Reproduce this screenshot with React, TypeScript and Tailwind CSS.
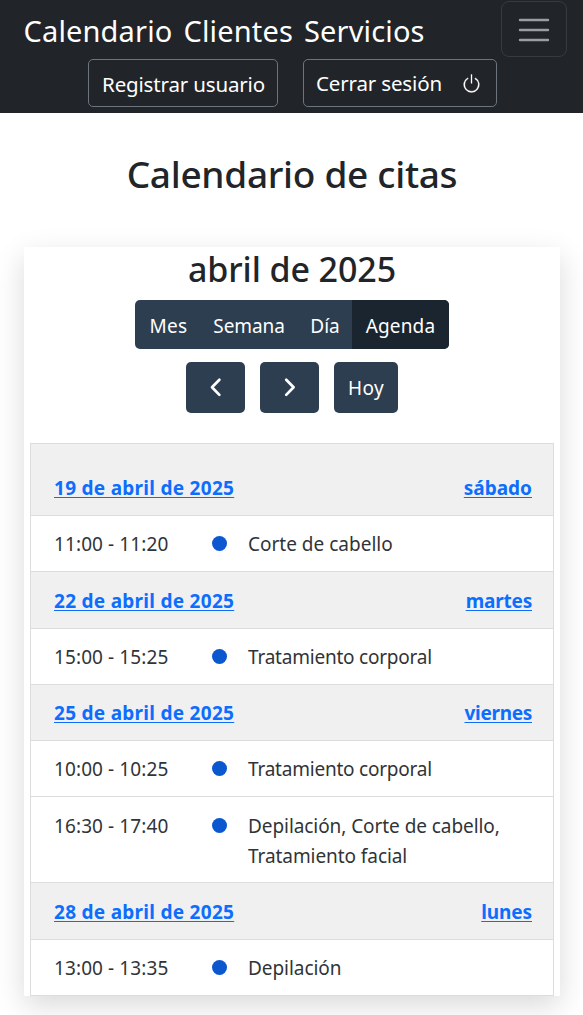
import React from "react";

type Appointment = { time: string; title: string; titleClass: string; rowClass: string };
type Day = { date: string; weekday: string; weekdayClass: string; rowClass: string; items: Appointment[] };

const days: Day[] = [
  {
    date: "19 de abril de 2025",
    weekday: "sábado",
    weekdayClass: "tracking-[0px]",
    rowClass: "h-[72px] pt-[18px]",
    items: [{ time: "11:00 - 11:20", title: "Corte de cabello", titleClass: "tracking-[0px]", rowClass: "h-14 pt-[13px]" }],
  },
  {
    date: "22 de abril de 2025",
    weekday: "martes",
    weekdayClass: "tracking-[-0.2px]",
    rowClass: "h-[57px] pt-[2px]",
    items: [{ time: "15:00 - 15:25", title: "Tratamiento corporal", titleClass: "tracking-[-0.22px]", rowClass: "h-14 pt-[13px]" }],
  },
  {
    date: "25 de abril de 2025",
    weekday: "viernes",
    weekdayClass: "tracking-[-0.3px]",
    rowClass: "h-14 pt-[2px]",
    items: [
      { time: "10:00 - 10:25", title: "Tratamiento corporal", titleClass: "tracking-[-0.22px]", rowClass: "h-14 pt-[13px]" },
      { time: "16:30 - 17:40", title: "Depilación, Corte de cabello, Tratamiento facial", titleClass: "tracking-[-0.07px]", rowClass: "h-[86px] pt-[14px]" },
    ],
  },
  {
    date: "28 de abril de 2025",
    weekday: "lunes",
    weekdayClass: "tracking-[-0.1px]",
    rowClass: "h-[57px] pt-[2px]",
    items: [{ time: "13:00 - 13:35", title: "Depilación", titleClass: "tracking-[-0.05px]", rowClass: "h-14 pt-[13px]" }],
  },
];

function Navbar() {
  return (
    <header className="h-[113px] bg-[#212529] text-white">
      <div className="flex h-[58px] items-start justify-between pt-px pr-4 pl-[23.5px]">
        <nav className="flex gap-[11px] pt-[10px] text-[29px] leading-[40px] tracking-[0.15px]">
          <a>Calendario</a>
          <a>Clientes</a>
          <a>Servicios</a>
        </nav>
        <button className="flex h-[56px] w-[66px] items-center justify-center rounded-[8px] border border-[#373b3e] pt-[2px]" aria-label="Menú">
          <svg width="32" height="24" viewBox="0 0 32 24" fill="none" stroke="#9b9d9f" strokeWidth="2.4" strokeLinecap="round">
            <path d="M2 2h28M2 12h28M2 22h28" />
          </svg>
        </button>
      </div>
      <div className="flex justify-center gap-[25px] pt-px pl-[2px]">
        <button className="h-12 w-[190px] rounded-[5px] border border-[#6c757d] pt-[2px] pl-px text-[20.5px] tracking-[-0.16px]">
          Registrar usuario
        </button>
        <button className="flex h-12 w-[194px] items-center justify-between rounded-[5px] border border-[#6c757d] pt-px pr-[14px] pl-3 text-[20.5px] tracking-[-0.15px]">
          Cerrar sesión
          <svg width="21" height="21" viewBox="0 0 16 16" fill="currentColor">
            <path d="M7.5 1v7h1V1z" />
            <path d="M3 8.812a5 5 0 0 1 2.578-4.375l-.485-.874A6 6 0 1 0 11 3.616l-.501.865A5 5 0 1 1 3 8.812" stroke="currentColor" strokeWidth="0.2" />
          </svg>
        </button>
      </div>
    </header>
  );
}

function Arrow({ d }: { d: string }) {
  return (
    <button className="flex h-[51px] w-[59px] items-center justify-center rounded-[5px] bg-[#2c3e50]">
      <svg width="30" height="30" viewBox="0 0 30 30" fill="none" stroke="white" strokeWidth="2.7" strokeLinecap="round" strokeLinejoin="round">
        <path d={d} />
      </svg>
    </button>
  );
}

function Toolbar() {
  return (
    <div className="flex flex-col items-center">
      <h2 className="h-[53px] text-[34px] leading-[44px] font-medium tracking-[-0.1px]">abril de 2025</h2>
      <div className="flex h-[49px] overflow-hidden rounded-[5px] bg-[#2c3e50] text-[19px] text-white">
        <button className="w-[65px] pt-[3px] pl-[2px] tracking-[0.3px]">Mes</button>
        <button className="w-[98px] pt-[3px] tracking-[-0.1px]">Semana</button>
        <button className="w-[54px] pt-[3px]">Día</button>
        <button className="w-[97px] bg-[#1a252f] pt-[3px] tracking-[0.15px]">Agenda</button>
      </div>
      <div className="mt-[13px] flex gap-[15px] text-[19px] text-white">
        <Arrow d="M18.4 6.7 11 14.3l7.4 7.6" />
        <Arrow d="M11.2 6.7 18.6 14.3l-7.4 7.6" />
        <button className="h-[51px] w-[64px] rounded-[5px] bg-[#2c3e50] pt-px tracking-[0.4px]">Hoy</button>
      </div>
    </div>
  );
}

function DayRows({ day }: { day: Day }) {
  return (
    <>
      <div className={`flex items-center justify-between border-b border-[#dddddd] bg-[#f0f0f0] pr-[21px] pl-[23px] font-bold text-[#0d6efd] ${day.rowClass}`}>
        <a className="tracking-[0.28px] underline decoration-1 underline-offset-[2px]">{day.date}</a>
        <a className={`underline decoration-1 underline-offset-[2px] ${day.weekdayClass}`}>{day.weekday}</a>
      </div>
      {day.items.map((item) => (
        <div key={item.time} className={`flex items-start border-b border-[#dddddd] bg-white pl-[23px] leading-[30px] text-[#303438] ${item.rowClass}`}>
          <span className="w-[158px] tracking-[0.1px]">{item.time}</span>
          <span className="mt-[7px] mr-[21px] size-[15px] shrink-0 rounded-full bg-[#0b57d0]" />
          <span className={`w-[280px] ${item.titleClass}`}>{item.title}</span>
        </div>
      ))}
    </>
  );
}

export default function App() {
  return (
    <div className="h-[1015px] w-[583px] overflow-hidden bg-white font-['Noto_Sans','Open_Sans',sans-serif] text-[#212529]">
      <Navbar />
      <h1 className="h-[134px] pt-[36px] pl-px text-center text-[37px] leading-[50px] font-medium tracking-[-0.3px]">Calendario de citas</h1>
      <main className="ml-6 h-[749px] w-[536px] bg-white shadow-[0_10px_28px_rgba(0,0,0,0.15)]">
        <Toolbar />
        <section className="mt-[30px] ml-[6px] w-[524px] border-x border-t border-[#dddddd] text-[19px]">
          {days.map((day) => (
            <DayRows key={day.date} day={day} />
          ))}
        </section>
      </main>
    </div>
  );
}
